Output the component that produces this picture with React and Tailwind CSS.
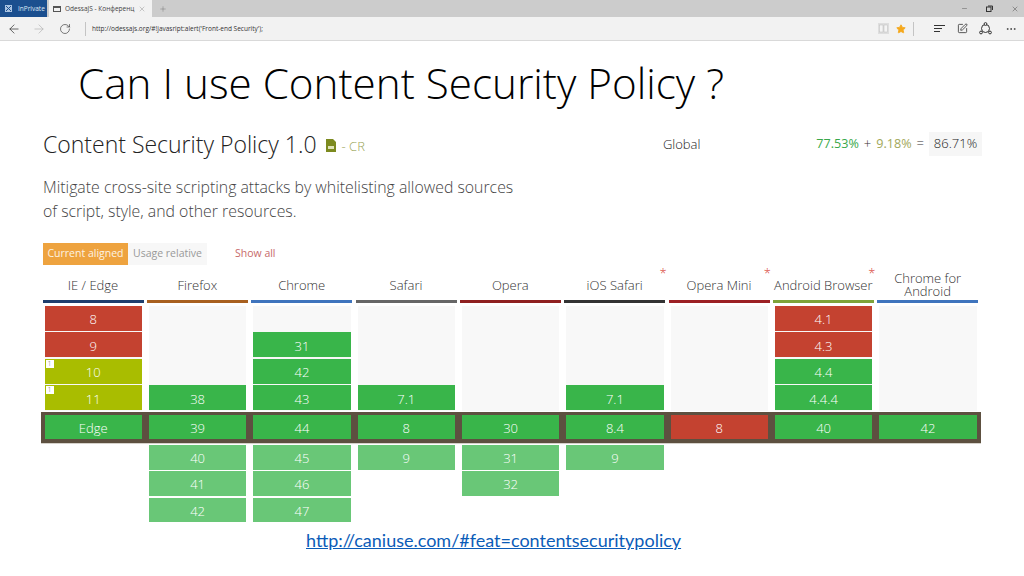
import React from "react";
import { ArrowLeft, ArrowRight, RotateCw, X, Plus, Minus, Star, SquarePen, Ellipsis } from "lucide-react";

const red = "bg-[#c44230]";
const green = "bg-[#39b54a]";
const lime = "bg-[#a9bd00]";
const pale = "bg-[#69c777]";

const columns = [
  { name: "IE / Edge", bar: "bg-[#1f3f6e]", past: [["8", red], ["9", red], ["10", lime, true], ["11", lime, true]], now: ["Edge", green], future: [] },
  { name: "Firefox", bar: "bg-[#a8601f]", past: [null, null, null, ["38", green]], now: ["39", green], future: ["40", "41", "42"] },
  { name: "Chrome", bar: "bg-[#3f74bd]", past: [null, ["31", green], ["42", green], ["43", green]], now: ["44", green], future: ["45", "46", "47"] },
  { name: "Safari", bar: "bg-[#666666]", past: [null, null, null, ["7.1", green]], now: ["8", green], future: ["9"] },
  { name: "Opera", bar: "bg-[#8f2020]", past: [null, null, null, null], now: ["30", green], future: ["31", "32"] },
  { name: "iOS Safari", bar: "bg-[#333333]", star: true, past: [null, null, null, ["7.1", green]], now: ["8.4", green], future: ["9"] },
  { name: "Opera Mini", bar: "bg-[#9c2024]", star: true, past: [null, null, null, null], now: ["8", red], future: [] },
  { name: "Android Browser", bar: "bg-[#7ea33a]", star: true, past: [["4.1", red], ["4.3", red], ["4.4", green], ["4.4.4", green]], now: ["40", green], future: [] },
  { name: "Chrome for\nAndroid", bar: "bg-[#3f74bd]", past: [null, null, null, null], now: ["42", green], future: [] },
];

const Cell = ({ label, color, note }) => (
  <div className={`relative h-[24.6px] w-[97.5px] flex items-center justify-center text-[13px] font-light text-white ${color}`}>
    {note && (
      <span className="absolute left-[1px] top-[1px] w-[8px] h-[8px] bg-white text-[#666] text-[7px] leading-[8px] text-center">1</span>
    )}
    <span className="pt-[3px]">{label}</span>
  </div>
);

const Toolbar = () => (
  <div className="h-[24px] bg-[#f2f2f2] border-b border-[#d9d9d9] flex items-center text-[#333]">
    <ArrowLeft size={14} strokeWidth={1.25} className="ml-[7px]" />
    <ArrowRight size={14} strokeWidth={1.25} className="ml-[11px] text-[#b5b5b5]" />
    <RotateCw size={12} strokeWidth={1.25} className="ml-[13px]" />
    <div className="ml-[14px] w-px h-[14px] bg-[#c4c4c4]" />
    <span className="ml-[6px] text-[6.5px] text-[#333] whitespace-nowrap">http://odessajs.org/#!javasript:alert('Front-end Security');</span>
    <div className="ml-auto flex items-center">
      <svg width="11" height="11" viewBox="0 0 11 11" className="mr-[7px]">
        <rect width="11" height="11" fill="#dedede" />
        <rect x="1.5" y="2" width="3.5" height="7" fill="#f4f4f4" stroke="#bdbdbd" strokeWidth="0.5" />
        <rect x="6" y="2" width="3.5" height="7" fill="#f4f4f4" stroke="#bdbdbd" strokeWidth="0.5" />
      </svg>
      <Star size={10} fill="#f5a81c" stroke="#f5a81c" className="mr-[7px]" />
      <div className="w-px h-[14px] bg-[#c4c4c4] mr-[20px]" />
      <svg width="11" height="8" viewBox="0 0 11 8" className="mr-[12px]" stroke="#333" strokeWidth="1">
        <path d="M0 .5h11M0 3.5h8M0 6.5h6" />
      </svg>
      <SquarePen size={11} strokeWidth={1.75} className="mr-[11px]" />
      <svg width="13" height="13" viewBox="0 0 13 13" fill="none" stroke="#333" strokeWidth="1" className="mr-[13px]">
        <circle cx="6.5" cy="6.5" r="4" />
        <circle cx="6.5" cy="2" r="1.4" fill="#f2f2f2" />
        <circle cx="2" cy="10.5" r="1.4" fill="#f2f2f2" />
        <circle cx="11" cy="10.5" r="1.4" fill="#f2f2f2" />
      </svg>
      <Ellipsis size={12} strokeWidth={1.5} className="mr-[7px]" />
    </div>
  </div>
);

const Tabs = () => (
  <div className="h-[17px] bg-[#cccccc] flex items-stretch text-[6.5px]">
    <div className="w-[47px] bg-[#1b4f8f] text-[#dfe9f5] flex items-center">
      <svg width="7" height="7" viewBox="0 0 7 7" className="ml-[5px]">
        <rect width="7" height="7" fill="#a9c3e2" />
        <path d="M1 1l5 5M6 1L1 6" stroke="#1b4f8f" strokeWidth="1" />
      </svg>
      <span className="ml-[6px]">InPrivate</span>
    </div>
    <div className="w-[103px] ml-[2px] bg-[#f2f2f2] text-[#444] flex items-center">
      <div className="ml-[4px] w-[8px] h-[6px] border border-[#555] border-t-2" />
      <span className="ml-[4px] w-[70px] truncate">OdessaJS - Конференц</span>
      <X size={8} strokeWidth={1} className="ml-[3px] text-[#666]" />
    </div>
    <Plus size={8} strokeWidth={1} className="ml-[7px] self-center text-[#555]" />
    <div className="ml-auto flex items-center text-[#333]">
      <Minus size={7} strokeWidth={1.25} className="mr-[18px]" />
      <svg width="7" height="7" viewBox="0 0 7 7" fill="none" stroke="#333" className="mr-[18px]">
        <rect x="0.5" y="2" width="4.5" height="4.5" />
        <path d="M2 1h4.5v4" />
      </svg>
      <X size={8} strokeWidth={1.25} className="mr-[5px]" />
    </div>
  </div>
);

export default function App() {
  return (
    <div className="w-[1024px] h-[576px] overflow-hidden bg-white font-['Open_Sans',sans-serif]">
      <Tabs />
      <Toolbar />

      <h1 className="ml-[78px] mt-[14px] h-[56px] text-[42.2px] font-light leading-[56px] text-black whitespace-nowrap">
        Can I use Content Security Policy ?
      </h1>

      <div className="mt-[20px] ml-[43px] w-[939px] h-[26px] flex items-center font-light">
        <h2 className="text-[23px] leading-[26px] text-[#222] whitespace-nowrap">Content Security Policy 1.0</h2>
        <svg width="10" height="13" viewBox="0 0 10 13" className="ml-[9px] mt-[3px]">
          <path d="M0 0h7l3 3v10H0z" fill="#7c8a1f" />
          <rect x="2" y="7" width="6" height="3" fill="#dfe3b8" />
        </svg>
        <span className="ml-[6px] mt-[5px] text-[13px] text-[#9aa55a]">- CR</span>
        <span className="ml-[298px] mt-[1px] text-[13px] text-[#222]">Global</span>
        <span className="ml-auto text-[12.6px] font-normal text-[#39a84a]">77.53%</span>
        <span className="ml-[5px] text-[13px] text-[#333]">+</span>
        <span className="ml-[5px] text-[12.6px] font-normal text-[#a2a85a]">9.18%</span>
        <span className="ml-[5px] text-[13px] text-[#333]">=</span>
        <span className="ml-[5px] w-[53px] h-[24px] bg-[#f6f6f6] flex items-center justify-center text-[13px] text-[#222]">86.71%</span>
      </div>

      <p className="mt-[18px] ml-[43px] text-[15.85px] leading-[24px] text-[#444] font-light whitespace-nowrap">
        Mitigate cross-site scripting attacks by whitelisting allowed sources
        <br />
        of script, style, and other resources.
      </p>

      <div className="mt-[20px] ml-[43px] h-[22px] flex items-center text-[10.5px]">
        <span className="h-full w-[85px] bg-[#eea33f] text-[#fdf3e3] flex items-center justify-center">Current aligned</span>
        <span className="h-full w-[79px] bg-[#f7f7f7] text-[#999] flex items-center justify-center">Usage relative</span>
        <span className="ml-[28px] text-[#c76a6a]">Show all</span>
      </div>

      <div className="mt-[6px] ml-[42px] w-[939px] grid grid-cols-9 h-[28px] text-[13px] leading-[13px] font-light text-[#333] text-center">
        {columns.map((c) => (
          <div key={c.name} className="relative w-[102px] flex items-center justify-center">
            <span className="whitespace-pre">{c.name}</span>
            {c.star && <span className="absolute right-[-1px] top-[-4px] text-[#d9453a] text-[13px] leading-[13px]">*</span>}
          </div>
        ))}
      </div>

      <div className="mt-[1px] ml-[42px] w-[939px] grid grid-cols-9">
        {columns.map((c) => (
          <div key={c.name} className={`w-[101px] ml-[0.5px] h-[3px] ${c.bar}`} />
        ))}
      </div>

      <div className="mt-[3px] ml-[42px] w-[939px] grid grid-cols-9">
        {columns.map((c) => (
          <div key={c.name} className="ml-[2.5px] w-[97.5px] h-[104.5px] bg-[#f8f8f8] flex flex-col gap-[1.9px]">
            {c.past.map((v, i) =>
              v ? <Cell key={i} label={v[0]} color={v[1]} note={v[2]} /> : <div key={i} className="h-[24.6px]" />
            )}
          </div>
        ))}
      </div>

      <div className="mt-[1px] ml-[41px] w-[940px] h-[32px] pl-px bg-[#5d5040] border-b border-[#d6d2cb] grid grid-cols-9 items-center">
        {columns.map((c) => (
          <div key={c.name} className="ml-[2.5px]">
            <Cell label={c.now[0]} color={c.now[1]} />
          </div>
        ))}
      </div>

      <div className="mt-[1.5px] ml-[42px] w-[939px] grid grid-cols-9">
        {columns.map((c) => (
          <div key={c.name} className="ml-[2.5px] flex flex-col gap-[1.7px]">
            {c.future.map((v) => (
              <Cell key={v} label={v} color={pale} />
            ))}
          </div>
        ))}
      </div>

      <div className="mt-[7px] ml-[306px] text-[18px] leading-[23px] font-['Lato',sans-serif] text-[#0b5cb8] underline whitespace-nowrap">
        http://caniuse.com/#feat=contentsecuritypolicy
      </div>
    </div>
  );
}
